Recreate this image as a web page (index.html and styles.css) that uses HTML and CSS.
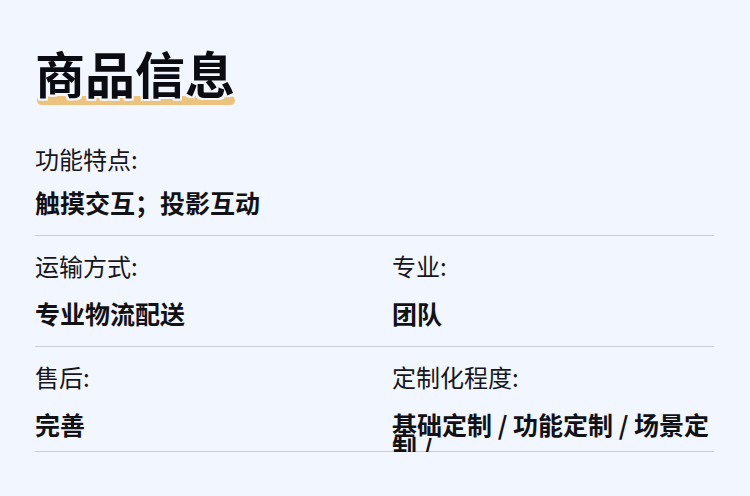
FILE: index.html
```html
<!DOCTYPE html>
<html lang="zh-CN">
<head>
<meta charset="utf-8">
<title>商品信息</title>
<link rel="stylesheet" href="styles.css">
</head>
<body>
<main class="page">
  <h1 class="title"><span class="title-text">商品信息</span></h1>
  <section class="specs">
    <div class="row row-first">
      <div class="item">
        <div class="label">功能特点:</div>
        <div class="value">触摸交互；投影互动</div>
      </div>
    </div>
    <div class="row row-two">
      <div class="item">
        <div class="label">运输方式:</div>
        <div class="value">专业物流配送</div>
      </div>
      <div class="item">
        <div class="label">专业:</div>
        <div class="value">团队</div>
      </div>
    </div>
    <div class="row row-two row-last">
      <div class="item">
        <div class="label">售后:</div>
        <div class="value">完善</div>
      </div>
      <div class="item">
        <div class="label">定制化程度:</div>
        <div class="value">基础定制 / 功能定制 / 场景定制 /</div>
      </div>
    </div>
  </section>
</main>
</body>
</html>
```
FILE: styles.css
```css
html, body {
  margin: 0;
  padding: 0;
}

body {
  background: #f2f6fe;
  font-family: "Noto Sans CJK SC", "Noto Sans", sans-serif;
  color: #111116;
}

.page {
  padding: 42px 0 0 35px;
  width: 679px;
}

.title {
  position: relative;
  z-index: 0;
  margin: 0;
  font-size: 50px;
  line-height: 60px;
  font-weight: 700;
  color: #0b0b12;
}

.title-text {
  position: relative;
  text-shadow:
    2px 0 0 #f2f6fe, -2px 0 0 #f2f6fe,
    0 2px 0 #f2f6fe, 0 -2px 0 #f2f6fe,
    2px 2px 0 #f2f6fe, -2px 2px 0 #f2f6fe,
    2px -2px 0 #f2f6fe, -2px -2px 0 #f2f6fe;
}

.title-text::after {
  content: "";
  position: absolute;
  z-index: -1;
  left: 2px;
  right: 0;
  bottom: 3px;
  height: 9px;
  border-radius: 5px;
  background: #ebc37f;
}

.specs {
  margin-top: 27px;
}

.row {
  display: grid;
  grid-template-columns: 357px 1fr;
  padding: 18px 0 21px;
  border-bottom: 1px solid #c9ccd4;
}

.row-first {
  grid-template-columns: 1fr;
}

.row-last {
  box-sizing: border-box;
  height: 105px;
  padding-bottom: 0;
}

.label {
  font-size: 24px;
  line-height: 24px;
  color: #16161c;
}

.value {
  margin-top: 24px;
  font-size: 25px;
  line-height: 23px;
  font-weight: 700;
  color: #111116;
}

.row-first .value {
  margin-top: 20px;
}
```
